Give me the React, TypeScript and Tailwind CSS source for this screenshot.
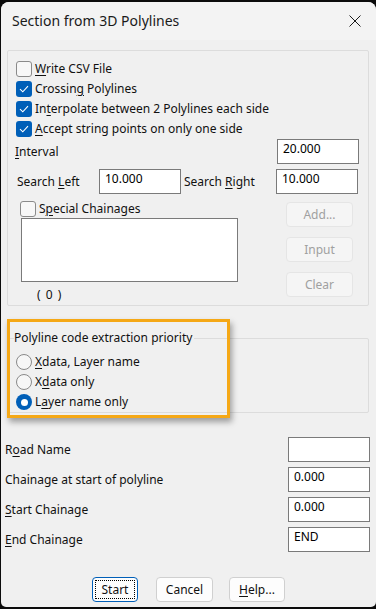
import React from 'react';

const FONT = "font-['Noto_Sans','Open_Sans',sans-serif]";

const U: React.FC<{ children: React.ReactNode }> = ({ children }) => (
  <span className="underline underline-offset-[2px] decoration-1">{children}</span>
);

const CheckBox: React.FC<{ checked?: boolean }> = ({ checked }) =>
  checked ? (
    <div className="w-4 h-4 rounded-[3px] bg-[#005fb8] flex items-center justify-center shrink-0">
      <svg width="10" height="8" viewBox="0 0 10 8" fill="none">
        <path d="M1 4.2 L3.8 6.8 L9 1.2" stroke="white" strokeWidth="1.1" />
      </svg>
    </div>
  ) : (
    <div className="w-4 h-4 rounded-[3px] border border-[#8a8a8a] bg-[#f7f7f7] shrink-0" />
  );

const Radio: React.FC<{ checked?: boolean }> = ({ checked }) =>
  checked ? (
    <div className="w-4 h-4 rounded-full bg-[#005fb8] flex items-center justify-center shrink-0">
      <div className="w-[7px] h-[7px] rounded-full bg-white" />
    </div>
  ) : (
    <div className="w-4 h-4 rounded-full border border-[#8a8a8a] bg-[#f7f7f7] shrink-0" />
  );

const Field: React.FC<{ value?: string; className?: string }> = ({ value, className }) => (
  <div className={`h-[25px] w-[82px] bg-white border border-[#7a7a7a] pl-[5px] pt-[1px] text-[12px] leading-[16px] text-black ${className ?? ''}`}>
    {value}
  </div>
);

const SideButton: React.FC<{ label: string }> = ({ label }) => (
  <div className="h-[25px] w-[67px] rounded-[4px] border border-[#e5e5e5] bg-[#f5f5f5] text-[#a0a0a0] flex items-center justify-center">
    {label}
  </div>
);

const CheckRow: React.FC<{ checked?: boolean; children: React.ReactNode }> = ({ checked, children }) => (
  <div className="h-5 flex items-center gap-[3px]">
    <CheckBox checked={checked} />
    <span>{children}</span>
  </div>
);

const RadioRow: React.FC<{ checked?: boolean; children: React.ReactNode }> = ({ checked, children }) => (
  <div className="h-5 flex items-center gap-[3px]">
    <Radio checked={checked} />
    <span>{children}</span>
  </div>
);

const BottomRow: React.FC<{ label: React.ReactNode; value?: string }> = ({ label, value }) => (
  <div className="h-[25px] flex items-center justify-between">
    <span>{label}</span>
    <Field value={value} className="w-[82px]" />
  </div>
);

export default function App() {
  return (
    <div className={`w-[376px] h-[609px] bg-[#0b0b0b] pt-[2px] pl-[1px] ${FONT}`}>
      <div className="w-[375px] h-[605px] bg-[#f0f0f0] rounded-t-[8px] rounded-b-[5px] overflow-hidden flex flex-col text-[12px] leading-[16px] text-[#111]">
        {/* title bar */}
        <div className="h-[38px] bg-[#f3f3f3] flex items-center justify-between pl-[11px] pr-[15px] shrink-0">
          <span className="text-[14px] font-normal text-[#1a1a1a]">Section from 3D Polylines</span>
          <svg width="12" height="12" viewBox="0 0 12 12">
            <path d="M0.5 0.5 L11.5 11.5 M11.5 0.5 L0.5 11.5" stroke="#1a1a1a" strokeWidth="1" />
          </svg>
        </div>

        {/* options group */}
        <div className="ml-[6px] mt-[10px] w-[362px] h-[256px] border border-[#dcdcdc] rounded-[2px] pl-[8px] pt-[8px] pr-[9px]">
          <CheckRow><U>W</U>rite CSV File</CheckRow>
          <CheckRow checked>Crossin<U>g</U> Polylines</CheckRow>
          <CheckRow checked>In<U>t</U>erpolate between 2 Polylines each side</CheckRow>
          <CheckRow checked><U>A</U>ccept string points on only one side</CheckRow>

          <div className="h-[25px] flex items-center justify-between">
            <span className="-ml-[1px]"><U>I</U>nterval</span>
            <Field value="20.000" className="w-[82px]" />
          </div>

          <div className="mt-[5px] h-[25px] flex items-center">
            <span className="ml-[1px] w-[82px]">Search <U>L</U>eft</span>
            <Field value="10.000" />
            <span className="ml-[3px] w-[92px]">Search <U>R</U>ight</span>
            <Field value="10.000" />
          </div>

          <div className="mt-[7px] flex justify-between pr-[6px]">
            <div className="pl-[4px]">
              <div className="h-4 flex items-center gap-[3px]">
                <CheckBox />
                <span>S<U>p</U>ecial Chainages</span>
              </div>
              <div className="mt-[1px] ml-[1px] w-[217px] h-[64px] bg-white border border-[#7a7a7a]" />
              <div className="mt-[5px] ml-[17px] tracking-[1px]">( 0 )</div>
            </div>
            <div className="flex flex-col gap-[10px] pt-[1px]">
              <SideButton label="Add..." />
              <SideButton label="Input" />
              <SideButton label="Clear" />
            </div>
          </div>
        </div>

        {/* priority group with highlight */}
        <div className="relative mt-[13px] h-[98px] shrink-0">
          <div className="ml-[7px] mt-[19px] w-[361px] h-[75px] border border-[#dcdcdc] rounded-[2px] relative pl-[7px] pt-[13px]">
            <span className="absolute -top-[9px] left-[5px] bg-[#f0f0f0] pr-[2px]">Polyline code extraction priority</span>
            <RadioRow><U>X</U>data, Layer name</RadioRow>
            <RadioRow>X<U>d</U>ata only</RadioRow>
            <RadioRow checked>L<U>a</U>yer name only</RadioRow>
          </div>
          <div className="absolute left-[6px] top-0 w-[223px] h-[99px] border-[3px] border-[#f5a816] shadow-[2px_4px_6px_rgba(0,0,0,0.35)]" />
        </div>

        {/* bottom fields */}
        <div className="mt-[20px] pl-[4px] pr-[6px] flex flex-col gap-[5px]">
          <BottomRow label={<>R<U>o</U>ad Name</>} />
          <BottomRow label="Chainage at start of polyline" value="0.000" />
          <BottomRow label={<><U>S</U>tart Chainage</>} value="0.000" />
          <BottomRow label={<><U>E</U>nd Chainage</>} value="END" />
        </div>

        {/* buttons */}
        <div className="mt-[25px] flex items-center pl-[91px]">
          <div className="h-[25px] w-[46px] rounded-[4px] border border-[#005fb8] bg-[#fdfdfd] p-[2px]">
            <div className="w-full h-full border border-dotted border-black flex items-center justify-center">Start</div>
          </div>
          <div className="ml-[18px] h-[25px] w-[57px] rounded-[4px] border border-[#d0d0d0] bg-[#fdfdfd] flex items-center justify-center">Cancel</div>
          <div className="ml-[16px] h-[25px] w-[56px] rounded-[4px] border border-[#d0d0d0] bg-[#fdfdfd] flex items-center justify-center"><U>H</U>elp...</div>
        </div>
      </div>
    </div>
  );
}
